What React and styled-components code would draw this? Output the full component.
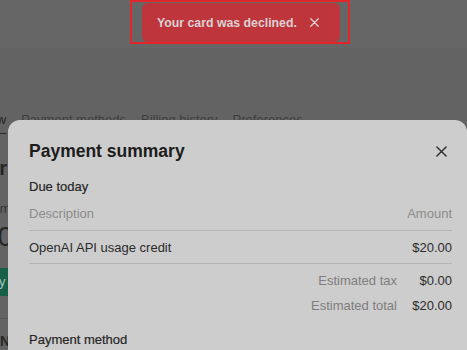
import styled, { createGlobalStyle } from 'styled-components';

const GlobalStyle = createGlobalStyle`
  html, body {
    margin: 0;
    padding: 0;
    background: #646464;
    font-family: "Liberation Sans", Arial, sans-serif;
  }
`;

const CloseIcon = ({ size = 11, stroke = 1.6 }) => (
  <svg width={size} height={size} viewBox="0 0 12 12" fill="none">
    <path d="M1 1L11 11M11 1L1 11" stroke="currentColor" strokeWidth={stroke} strokeLinecap="round" />
  </svg>
);

const tabs = ['Overview', 'Payment methods', 'Billing history', 'Preferences'];

const App = () => {
  return (
    <>
      <GlobalStyle />
      <StPage>
        <StHeader />
        <StMain>
          <StTabs>
            {tabs.map((t, i) => (
              <StTab key={t} $active={i === 0}>
                {t}
              </StTab>
            ))}
          </StTabs>
          <StOverview>
            <StHeading>Pricing</StHeading>
            <StSmall>Credit remaining</StSmall>
            <StBig>$0.00</StBig>
            <StGreenButton>Pay</StGreenButton>
            <StRule />
            <StSubHeading>Next steps</StSubHeading>
          </StOverview>
        </StMain>

        <StModal>
          <StModalHead>
            <StModalTitle>Payment summary</StModalTitle>
            <StCloseButton>
              <CloseIcon />
            </StCloseButton>
          </StModalHead>
          <StSectionLabel>Due today</StSectionLabel>
          <StLineRow $muted>
            <span>Description</span>
            <span>Amount</span>
          </StLineRow>
          <StLineRow>
            <span>OpenAI API usage credit</span>
            <span>$20.00</span>
          </StLineRow>
          <StTotals>
            <StTotalLabel>Estimated tax</StTotalLabel>
            <StTotalValue>$0.00</StTotalValue>
            <StTotalLabel>Estimated total</StTotalLabel>
            <StTotalValue>$20.00</StTotalValue>
          </StTotals>
          <StSectionLabel $top={16}>Payment method</StSectionLabel>
        </StModal>

        <StToastFrame>
          <StToast>
            <span>Your card was declined.</span>
            <StToastClose>
              <CloseIcon size={9} stroke={1.7} />
            </StToastClose>
          </StToast>
        </StToastFrame>
      </StPage>
    </>
  );
};

export default App;

const StPage = styled.div`
  position: relative;
  width: 467px;
  height: 350px;
  overflow: hidden;
  background: #636363;
`;

const StHeader = styled.div`
  height: 48px;
  background: #666666;
`;

const StMain = styled.div`
  margin-left: -48px;
  padding-top: 62px;
`;

const StTabs = styled.div`
  display: flex;
  gap: 15px;
  border-bottom: 1px solid #5a5a5a;
  font-size: 13px;
  line-height: 20px;
`;

const StTab = styled.div`
  padding-bottom: 3px;
  color: ${({ $active }) => ($active ? '#262626' : '#3e3e3e')};
  border-bottom: 1px solid ${({ $active }) => ($active ? '#2a2a2a' : 'transparent')};
  margin-bottom: -1px;
`;

const StOverview = styled.div`
  display: flex;
  flex-direction: column;
  align-items: flex-start;
  padding-left: 10px;
  padding-top: 22px;
  color: #262626;
`;

const StHeading = styled.div`
  font-size: 20px;
  font-weight: 700;
  line-height: 24px;
  margin-left: 24px;
`;

const StSmall = styled.div`
  margin-top: 20px;
  font-size: 13px;
  line-height: 18px;
  color: #333;
  margin-left: -12px;
`;

const StBig = styled.div`
  margin-top: 2px;
  font-size: 28px;
  line-height: 34px;
  margin-left: 20px;
`;

const StGreenButton = styled.div`
  margin-top: 14px;
  padding: 0 12px;
  height: 28px;
  line-height: 28px;
  background: #16604a;
  color: #a9c4b9;
  font-size: 13px;
  border-radius: 4px;
  margin-left: 9px;
`;

const StRule = styled.div`
  align-self: stretch;
  margin-top: 22px;
  height: 1px;
  background: #555;
`;

const StSubHeading = styled.div`
  margin-top: 13px;
  margin-left: 38px;
  font-size: 14px;
  font-weight: 700;
  line-height: 18px;
`;

const StModal = styled.div`
  position: absolute;
  left: 8px;
  top: 120px;
  width: 459px;
  height: 260px;
  box-sizing: border-box;
  padding: 19px 15px 0 21px;
  background: #cdcdcd;
  border-radius: 12px 12px 0 0;
  color: #2b2b2b;
`;

const StModalHead = styled.div`
  display: flex;
  align-items: center;
  justify-content: space-between;
  height: 24px;
`;

const StModalTitle = styled.h2`
  margin: 0;
  font-size: 17.5px;
  font-weight: 700;
  color: #1c1c1c;
`;

const StCloseButton = styled.span`
  display: flex;
  margin-right: 5px;
  color: #2e2e2e;
`;

const StSectionLabel = styled.div`
  margin-top: ${({ $top }) => $top ?? 15}px;
  font-size: 13px;
  line-height: 18px;
  color: #262626;
  -webkit-text-stroke: 0.2px #262626;
`;

const StLineRow = styled.div`
  display: flex;
  justify-content: space-between;
  padding: ${({ $muted }) => ($muted ? '9px 0 7px' : '8px 0 6px')};
  border-bottom: 1px solid #b4b4b4;
  font-size: 13px;
  line-height: 18px;
  color: ${({ $muted }) => ($muted ? '#8c8c8c' : '#2b2b2b')};
`;

const StTotals = styled.div`
  display: grid;
  grid-template-columns: auto 42px;
  justify-content: end;
  column-gap: 13px;
  row-gap: 7px;
  padding-top: 8px;
  font-size: 13px;
  line-height: 18px;
`;

const StTotalLabel = styled.span`
  text-align: right;
  color: #7e7e7e;
`;

const StTotalValue = styled.span`
  text-align: right;
  color: #2b2b2b;
`;

const StToastFrame = styled.div`
  position: absolute;
  left: 130px;
  top: 0;
  width: 220px;
  height: 44px;
  box-sizing: border-box;
  border: 2px solid #e4252b;
  padding: 1px 8px 0 10px;
`;

const StToast = styled.div`
  display: flex;
  align-items: center;
  gap: 13px;
  height: 39px;
  padding: 0 20px 0 15px;
  background: #bf353c;
  border-radius: 6px;
  color: #dad2d3;
  font-size: 12.3px;
  font-weight: 700;
  white-space: nowrap;
`;

const StToastClose = styled.span`
  display: flex;
`;
